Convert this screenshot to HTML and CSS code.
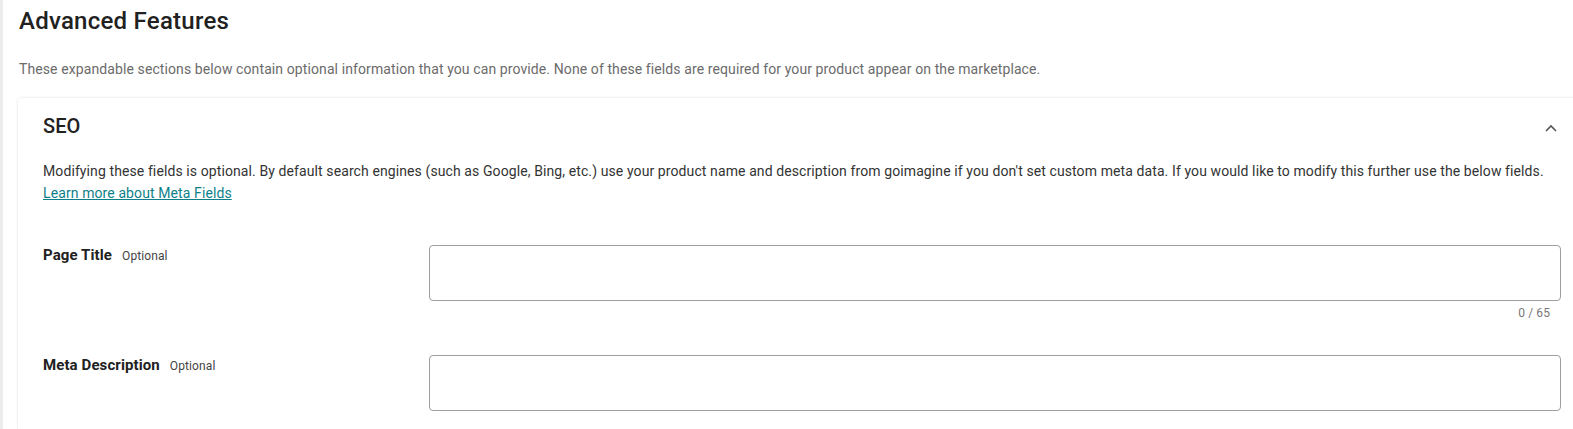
FILE: index.html
```html
<!DOCTYPE html>
<html>
<head>
<meta charset="utf-8">
<link rel="stylesheet" href="styles.css">
</head>
<body>
<div class="page">
  <h1 class="title">Advanced Features</h1>
  <p class="intro">These expandable sections below contain optional information that you can provide. None of these fields are required for your product appear on the marketplace.</p>
  <section class="card">
    <div class="card-head">
      <h2 class="card-title">SEO</h2>
      <svg class="chev" width="12" height="8" viewBox="0 0 12 8"><path d="M1 7 L6 2 L11 7" fill="none" stroke="#555" stroke-width="1.6"/></svg>
    </div>
    <p class="help">Modifying these fields is optional. By default search engines (such as Google, Bing, etc.) use your product name and description from goimagine if you don't set custom meta data. If you would like to modify this further use the below fields.<br><a class="link" href="#">Learn more about Meta Fields</a></p>
    <div class="fields">
      <div class="field">
        <div class="label"><span class="label-name">Page Title</span><span class="opt">Optional</span></div>
        <div class="control">
          <div class="input"></div>
          <div class="counter">0 / 65</div>
        </div>
      </div>
      <div class="field field-last">
        <div class="label"><span class="label-name">Meta Description</span><span class="opt">Optional</span></div>
        <div class="control">
          <div class="input"></div>
        </div>
      </div>
    </div>
  </section>
</div>
</body>
</html>
```
FILE: styles.css
```css
html, body {
  margin: 0;
  padding: 0;
  background: #fff;
  overflow: hidden;
}
body {
  font-family: Roboto, "Liberation Sans", sans-serif;
  color: #212121;
  height: 429px;
  letter-spacing: 0.1px;
}
.page {
  box-sizing: border-box;
  border-left: 3px solid #ececec;
  padding-left: 15px;
  padding-top: 5px;
  width: 1573px;
  height: 429px;
  overflow: hidden;
}
.title {
  margin: 0 0 0 1px;
  font-size: 24px;
  letter-spacing: 0.25px;
  line-height: 32px;
  font-weight: 500;
  color: #212121;
}
.intro {
  margin: 22px 0 0 1px;
  font-size: 14px;
  line-height: 20px;
  color: #6b6b6b;
}
.card {
  margin-top: 19px;
  background: #fff;
  box-shadow: 0 0 3px rgba(0,0,0,0.12);
  border-radius: 4px 0 0 0;
  padding: 15px 0 0 25px;
  width: 1545px;
  height: 317px;
}
.card-head {
  display: flex;
  align-items: center;
  justify-content: space-between;
  padding-right: 31px;
}
.card-title {
  margin: 0;
  font-size: 20px;
  line-height: 26px;
  font-weight: 500;
  color: #212121;
}
.chev { display: block; margin-top: 4px; }
.help {
  margin: 21px 0 0 0;
  font-size: 14px;
  line-height: 22px;
  color: #333;
  padding-right: 4px;
}
.link {
  color: #0e7f8a;
  text-decoration: underline;
}
.fields {
  margin-top: 41px;
}
.field {
  display: flex;
}
.label {
  width: 386px;
}
.label-name {
  font-size: 15px;
  font-weight: 700;
  color: #212121;
}
.opt {
  font-size: 12px;
  color: #444;
  margin-left: 10px;
}
.control {
  width: 1132px;
  height: 110px;
}
.field-last .control {
  height: 56px;
}
.input {
  height: 54px;
  border: 1px solid #9e9e9e;
  border-radius: 4px;
}
.counter {
  text-align: right;
  padding-right: 11px;
  margin-top: 5px;
  font-size: 12px;
  color: #777;
}
```
